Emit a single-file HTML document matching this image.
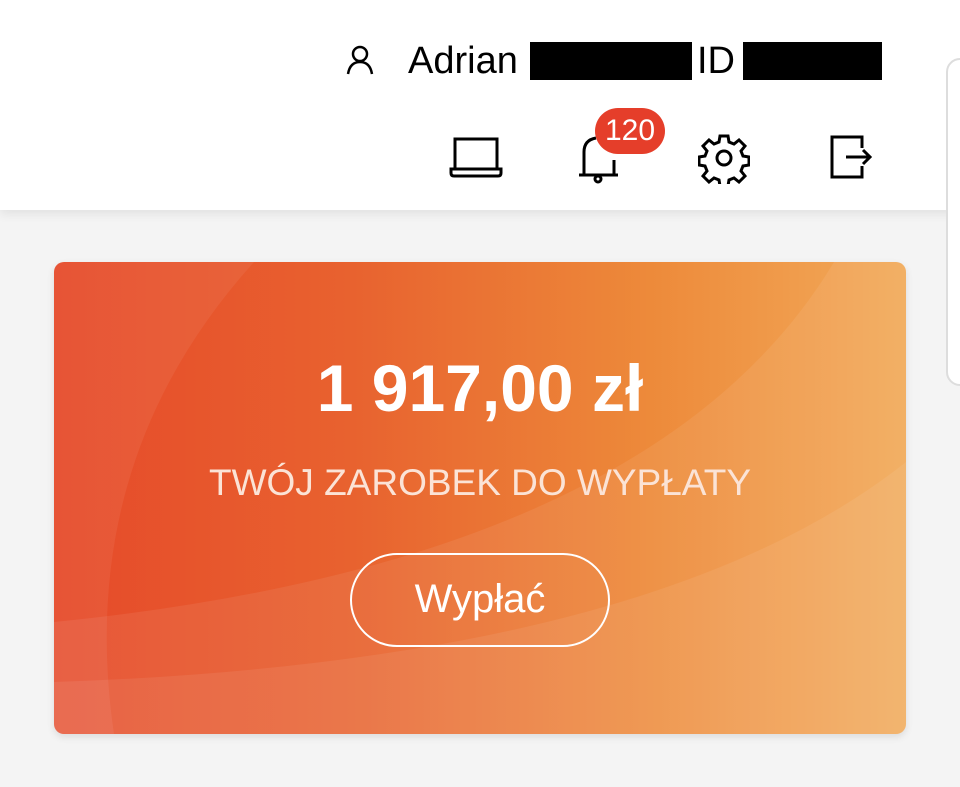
<!DOCTYPE html>
<html><head><meta charset="utf-8"><style>
*{margin:0;padding:0;box-sizing:border-box}
body{width:960px;height:787px;background:#f4f4f4;font-family:"Liberation Sans",sans-serif;position:relative;overflow:hidden}
.hdr{position:absolute;left:0;top:0;width:960px;height:210px;background:#fff;box-shadow:0 4px 10px rgba(0,0,0,.08)}
.abs{position:absolute}
.card{position:absolute;left:54px;top:262px;width:852px;height:472px;border-radius:10px;overflow:hidden;
background:linear-gradient(90deg,#e64a2a 0%,#e8622f 35%,#ed8a3a 70%,#f2aa5a 100%);box-shadow:0 3px 8px rgba(0,0,0,.1)}
.t{position:absolute;left:0;width:100%;text-align:center;color:#fff}
</style></head><body>
<div class="hdr">
<svg class="abs" style="left:343px;top:43px" width="34" height="34" viewBox="0 0 34 34" fill="none" stroke="#000" stroke-width="2.5"><circle cx="17" cy="11" r="7"/><path d="M5 31 Q7 19 17 19 Q27 19 29 31"/></svg>
<div class="abs" style="left:408px;top:40px;font-size:38px;color:#000">Adrian</div>
<div class="abs" style="left:530px;top:42px;width:162px;height:38px;background:#000"></div>
<div class="abs" style="left:697px;top:40px;font-size:38px;color:#000">ID</div>
<div class="abs" style="left:743px;top:42px;width:139px;height:38px;background:#000"></div>
<svg class="abs" style="left:448px;top:135px" width="56" height="44" viewBox="0 0 56 44" fill="none" stroke="#000" stroke-width="3"><rect x="7" y="4" width="42" height="30"/><path d="M3 34 H53 V38 Q53 41 50 41 H6 Q3 41 3 38Z"/></svg>
<svg class="abs" style="left:576px;top:130px" width="46" height="54" viewBox="0 0 46 54" fill="none" stroke="#000" stroke-width="3"><path d="M8 44 V22 Q8 10 20 8 M38 44 V30"/><path d="M3 45 H42"/><circle cx="22" cy="49" r="3"/></svg>
<div class="abs" style="left:595px;top:108px;width:70px;height:46px;border-radius:23px;background:#e53e2a;color:#fff;font-size:30px;text-align:center;line-height:46px">120</div>
<svg class="abs" style="left:698px;top:132px" width="52" height="52" viewBox="0 0 52 52" fill="none" stroke="#000" stroke-width="3"><path d="M22 4h8l1 6 5 2 5-4 6 6-4 5 2 5 6 1v8l-6 1-2 5 4 5-6 6-5-4-5 2-1 6h-8l-1-6-5-2-5 4-6-6 4-5-2-5-6-1v-8l6-1 2-5-4-5 6-6 5 4 5-2z"/><circle cx="26" cy="26" r="7"/></svg>
<svg class="abs" style="left:828px;top:134px" width="46" height="46" viewBox="0 0 46 46" fill="none" stroke="#000" stroke-width="3"><path d="M34 14 V3 H4 V43 H34 V32"/><path d="M18 23 H42 M35 16 L42 23 L35 30"/></svg>
</div>
<div class="abs" style="left:946px;top:58px;width:30px;height:328px;border:2px solid #ddd;border-radius:14px;background:#fff"></div>
<div class="card">
<svg class="abs" style="left:0;top:0" width="852" height="472" viewBox="0 0 852 472"><path d="M200 0 Q20 200 60 472 L0 472 L0 0Z" fill="rgba(255,255,255,.06)"/><path d="M780 0 Q600 300 0 360 L0 472 L852 472 L852 0Z" fill="rgba(255,255,255,.07)"/><path d="M852 200 Q600 400 0 420 L0 472 L852 472Z" fill="rgba(255,255,255,.07)"/></svg>
<div class="t" style="top:88px;font-size:66px;font-weight:bold">1 917,00 zł</div>
<div class="t" style="top:200px;font-size:37px;color:#fbe3d6">TWÓJ ZAROBEK DO WYPŁATY</div>
<div class="abs" style="left:296px;top:291px;width:260px;height:94px;border:2.5px solid #fff;border-radius:47px;color:#fff;font-size:40px;text-align:center;line-height:88px">Wypłać</div>
</div>
</body></html>
